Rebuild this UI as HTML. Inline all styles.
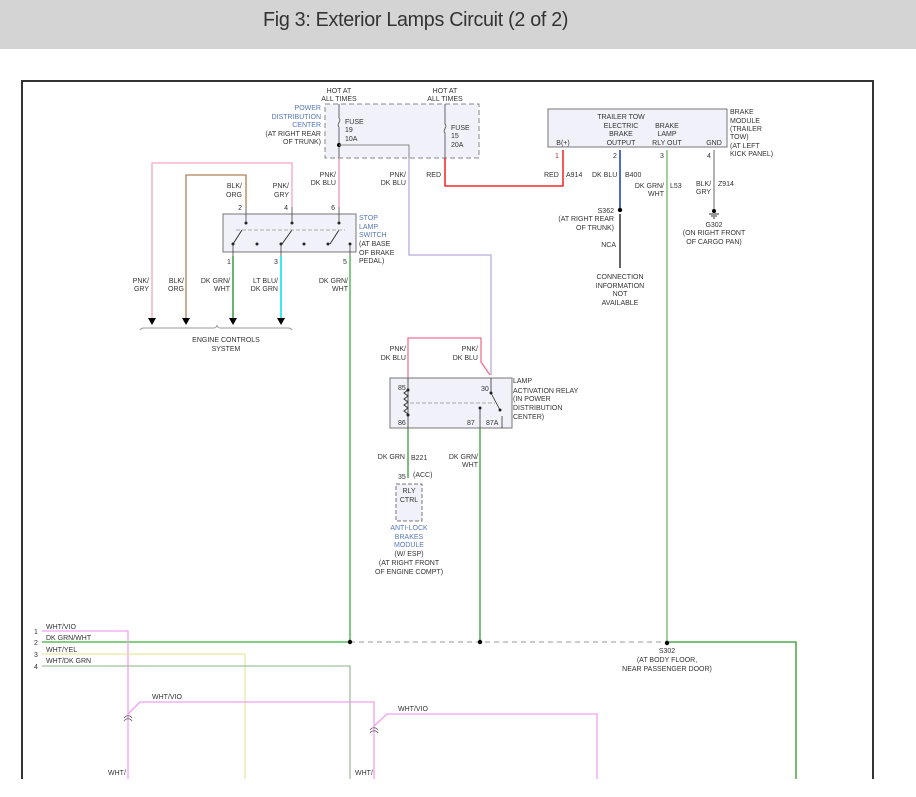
<!DOCTYPE html>
<html><head><meta charset="utf-8"><style>
body{margin:0;width:916px;height:797px;background:#fff;overflow:hidden;font-family:"Liberation Sans",sans-serif}
.hdr{position:absolute;left:0;top:0;width:916px;height:49px;background:#d4d4d4}
.hdr span{position:absolute;left:263px;top:9px;font-size:20px;color:#333;transform:scaleX(.985);transform-origin:left;letter-spacing:-0.3px}
svg{position:absolute;left:0;top:0}
text{font-family:"Liberation Sans",sans-serif;font-size:7px;fill:#333}
.b{fill:#5577bb}
.m{text-anchor:middle}.e{text-anchor:end}
</style></head><body>
<div class="hdr"><span>Fig 3: Exterior Lamps Circuit (2 of 2)</span></div>
<svg width="916" height="797" viewBox="0 0 916 797">
<path d="M22,779V81H873V779" fill="none" stroke="#333" stroke-width="2"/>
<!-- PDC -->
<rect x="325" y="104" width="154" height="54" fill="#f1f1fa" stroke="#888" stroke-dasharray="5,3"/>
<text class="m" x="339" y="93">HOT AT</text><text class="m" x="339" y="101">ALL TIMES</text>
<text class="m" x="445" y="93">HOT AT</text><text class="m" x="445" y="101">ALL TIMES</text>
<text class="e b" x="321" y="110">POWER</text><text class="e b" x="321" y="119">DISTRIBUTION</text><text class="e b" x="321" y="127">CENTER</text>
<text class="e" x="321" y="136">(AT RIGHT REAR</text><text class="e" x="321" y="144">OF TRUNK)</text>
<text x="345" y="124">FUSE</text><text x="345" y="132">19</text><text x="345" y="141">10A</text>
<text x="451" y="130">FUSE</text><text x="451" y="138">15</text><text x="451" y="147">20A</text>
<path d="M339,104V118M339,118c3,3 -3,6 0,9M339,127V207" stroke="#666" fill="none"/>
<path d="M445,104V124c3,3 -3,6 0,9V158" stroke="#666" fill="none"/>
<circle cx="339" cy="145" r="2" fill="#000"/>
<path d="M339,145H409V158" stroke="#888" fill="none"/>
<path d="M409,158V255H491V375" stroke="#b9a9d9" stroke-width="1.3" fill="none"/>
<path d="M339,158V207" stroke="#f090b0" stroke-width="1.3" fill="none"/>
<path d="M445,158V186H563V150" stroke="#e00" stroke-width="1.3" fill="none"/>
<text class="e" x="336" y="177">PNK/</text><text class="e" x="336" y="185">DK BLU</text>
<text class="e" x="406" y="177">PNK/</text><text class="e" x="406" y="185">DK BLU</text>
<text class="e" x="441" y="177">RED</text>
<!-- switch wires -->
<path d="M152,318V163H292V207" stroke="#f4a6c0" stroke-width="1.3" fill="none"/>
<path d="M186,318V175H246V207" stroke="#b08055" stroke-width="1.3" fill="none"/>
<text class="e" x="242" y="188">BLK/</text><text class="e" x="242" y="197">ORG</text>
<text class="e" x="289" y="188">PNK/</text><text class="e" x="289" y="197">GRY</text>
<text class="e" x="242" y="210">2</text><text class="e" x="288" y="210">4</text><text class="e" x="335" y="210">6</text>
<rect x="223" y="214" width="133" height="38" fill="#f1f1fa" stroke="#777"/>
<path d="M242,230L233,244M292,230L282,244M339,230L330,244" stroke="#333"/>
<path d="M236,230H345" stroke="#aaa" stroke-dasharray="4,2"/>
<g fill="#222"><circle cx="246" cy="223" r="1.5"/><circle cx="292" cy="223" r="1.5"/><circle cx="339" cy="223" r="1.5"/><circle cx="233" cy="244" r="1.5"/><circle cx="281" cy="244" r="1.5"/><circle cx="328" cy="244" r="1.5"/><circle cx="257" cy="244" r="1.5"/><circle cx="304" cy="244" r="1.5"/><circle cx="350" cy="244" r="1.5"/></g>
<path d="M246,207V223M292,207V223M339,207V223M233,244V256M281,244V256M350,244V256" stroke="#444" stroke-width=".8"/>
<text class="b" x="359" y="220">STOP</text><text class="b" x="359" y="229">LAMP</text><text class="b" x="359" y="237">SWITCH</text>
<text x="359" y="246">(AT BASE</text><text x="359" y="255">OF BRAKE</text><text x="359" y="263">PEDAL)</text>
<text x="227" y="264">1</text><text x="274" y="264">3</text><text x="343" y="264">5</text>
<path d="M233,256V318" stroke="#1a8a1a" stroke-width="1.3"/>
<path d="M281,256V318" stroke="#00e0f0" stroke-width="1.5"/>
<path d="M350,256V642" stroke="#3ab03a" stroke-width="1.3"/>
<text class="e" x="149" y="283">PNK/</text><text class="e" x="149" y="291">GRY</text>
<text class="e" x="184" y="283">BLK/</text><text class="e" x="184" y="291">ORG</text>
<text class="e" x="230" y="283">DK GRN/</text><text class="e" x="230" y="291">WHT</text>
<text class="e" x="278" y="283">LT BLU/</text><text class="e" x="278" y="291">DK GRN</text>
<text class="e" x="348" y="283">DK GRN/</text><text class="e" x="348" y="291">WHT</text>
<g fill="#000"><path d="M148,318h8l-4,7z"/><path d="M182,318h8l-4,7z"/><path d="M229,318h8l-4,7z"/><path d="M277,318h8l-4,7z"/></g>
<path d="M140,330c2,-2 2,-2 4,-2H214c2,0 3,-2 3,-3c0,1 1,3 3,3H288c2,0 2,0 4,2" stroke="#999" fill="none"/>
<text class="m" x="226" y="342">ENGINE CONTROLS</text><text class="m" x="226" y="351">SYSTEM</text>
<!-- relay -->
<path d="M408,378V338H481V362L490,375" stroke="#f07090" stroke-width="1.3" fill="none"/>
<text class="e" x="406" y="351">PNK/</text><text class="e" x="406" y="360">DK BLU</text>
<text class="e" x="478" y="351">PNK/</text><text class="e" x="478" y="360">DK BLU</text>
<rect x="390" y="378" width="122" height="50" fill="#f1f1fa" stroke="#777"/>
<path d="M408,378V428M491,378V393L500,410M480,408V428M502,416V428" stroke="#333" stroke-width=".8" fill="none"/>
<path d="M408,390l-4,3l4,3l-4,3l4,3l-4,3l4,3l-4,3l4,3" stroke="#333" fill="none"/>
<path d="M410,403H495" stroke="#aaa" stroke-dasharray="4,2"/>
<g fill="#222"><circle cx="408" cy="390" r="1.5"/><circle cx="408" cy="415" r="1.5"/><circle cx="491" cy="393" r="1.5"/><circle cx="480" cy="408" r="1.5"/><circle cx="500" cy="410" r="1.5"/></g>
<text x="398" y="390">85</text><text x="398" y="425">86</text><text x="481" y="391">30</text><text x="467" y="425">87</text><text x="486" y="425">87A</text>
<text x="513" y="383">LAMP</text><text x="513" y="393">ACTIVATION RELAY</text><text x="513" y="401">(IN POWER</text><text x="513" y="410">DISTRIBUTION</text><text x="513" y="419">CENTER)</text>
<path d="M408,428V478" stroke="#3a9a3a" stroke-width="1.3"/>
<path d="M480,428V642" stroke="#3a9a3a" stroke-width="1.3"/>
<text class="e" x="405" y="459">DK GRN</text><text x="411" y="460">B221</text>
<text class="e" x="478" y="459">DK GRN/</text><text class="e" x="478" y="467">WHT</text>
<text x="398" y="479">35</text><text x="413" y="477">(ACC)</text>
<rect x="396" y="484" width="26" height="37" fill="#f1f1fa" stroke="#777" stroke-dasharray="4,2"/>
<text class="m" x="409" y="493">RLY</text><text class="m" x="409" y="502">CTRL</text>
<text class="m b" x="409" y="530">ANTI-LOCK</text><text class="m b" x="409" y="539">BRAKES</text><text class="m b" x="409" y="547">MODULE</text>
<text class="m" x="409" y="556">(W/ ESP)</text><text class="m" x="409" y="565">(AT RIGHT FRONT</text><text class="m" x="409" y="574">OF ENGINE COMPT)</text>
<!-- brake module -->
<rect x="548" y="109" width="179" height="38" fill="#f1f1fa" stroke="#777"/>
<text class="m" x="621" y="119">TRAILER TOW</text><text class="m" x="621" y="128">ELECTRIC</text><text class="m" x="621" y="136">BRAKE</text><text class="m" x="621" y="145">OUTPUT</text>
<text class="m" x="667" y="128">BRAKE</text><text class="m" x="667" y="136">LAMP</text><text class="m" x="667" y="145">RLY OUT</text>
<text class="m" x="563" y="145">B(+)</text><text class="m" x="714" y="145">GND</text>
<text x="730" y="114">BRAKE</text><text x="730" y="123">MODULE</text><text x="730" y="131">(TRAILER</text><text x="730" y="139">TOW)</text><text x="730" y="148">(AT LEFT</text><text x="730" y="156">KICK PANEL)</text>
<text x="555" y="158" style="fill:#a33">1</text><text x="613" y="158">2</text><text x="660" y="158">3</text><text x="707" y="158">4</text>
<path d="M620,150V208" stroke="#1a3aaa" stroke-width="1.5"/>
<path d="M620,214V268" stroke="#111" stroke-width="1.3"/>
<circle cx="620" cy="210" r="2.2" fill="#000"/>
<path d="M667,150V642" stroke="#80c080" stroke-width="1.5"/>
<path d="M714,150V209" stroke="#999" stroke-width="1.5"/>
<circle cx="714" cy="211" r="2" fill="#000"/><path d="M709,214h10M711,216h6M713,218h2" stroke="#333"/>
<text x="544" y="177">RED</text><text x="566" y="177">A914</text>
<text x="592" y="177">DK BLU</text><text x="625" y="177">B400</text>
<text class="e" x="664" y="188">DK GRN/</text><text class="e" x="664" y="196">WHT</text><text x="670" y="188">L53</text>
<text x="696" y="186">BLK/</text><text x="696" y="194">GRY</text><text x="718" y="186">Z914</text>
<text class="e" x="614" y="213">S362</text><text class="e" x="614" y="221">(AT RIGHT REAR</text><text class="e" x="614" y="230">OF TRUNK)</text>
<text class="e" x="616" y="247">NCA</text>
<text class="m" x="620" y="279">CONNECTION</text><text class="m" x="620" y="288">INFORMATION</text><text class="m" x="620" y="296">NOT</text><text class="m" x="620" y="305">AVAILABLE</text>
<text class="m" x="714" y="227">G302</text><text class="m" x="714" y="235">(ON RIGHT FRONT</text><text class="m" x="714" y="244">OF CARGO PAN)</text>
<!-- bus -->
<path d="M42,642H350" stroke="#3ab03a" stroke-width="1.3"/>
<path d="M350,642H667" stroke="#999" stroke-dasharray="5,4"/>
<path d="M667,642H796V779" stroke="#2a9a2a" stroke-width="1.3" fill="none"/>
<g fill="#000"><circle cx="350" cy="642" r="2.2"/><circle cx="480" cy="642" r="2.2"/><circle cx="667" cy="643" r="2.2"/></g>
<text class="m" x="667" y="653">S302</text><text class="m" x="667" y="662">(AT BODY FLOOR,</text><text class="m" x="667" y="671">NEAR PASSENGER DOOR)</text>
<path d="M42,631H128V779" stroke="#f0a0f0" stroke-width="1.3" fill="none"/>
<path d="M42,654H245V779" stroke="#e8e8a0" stroke-width="1.3" fill="none"/>
<path d="M42,666H350V779" stroke="#a0c0a0" stroke-width="1.3" fill="none"/>
<text x="34" y="634">1</text><text x="34" y="645">2</text><text x="34" y="657">3</text><text x="34" y="669">4</text>
<text x="46" y="629">WHT/VIO</text><text x="46" y="640">DK GRN/WHT</text><text x="46" y="652">WHT/YEL</text><text x="46" y="663">WHT/DK GRN</text>
<path d="M128,714L140,702H374V779" stroke="#f0a0f0" stroke-width="1.3" fill="none"/>
<path d="M374,726L387,714H597V779" stroke="#f0a0f0" stroke-width="1.3" fill="none"/>
<path d="M124,718c2,-3 6,-3 8,0M124,721c2,-3 6,-3 8,0M370,730c2,-3 6,-3 8,0M370,733c2,-3 6,-3 8,0" stroke="#555" fill="none" stroke-width=".8"/>
<text x="152" y="699">WHT/VIO</text><text x="398" y="711">WHT/VIO</text>
<text x="108" y="775">WHT/</text><text x="355" y="775">WHT/</text>
</svg>
</body></html>
